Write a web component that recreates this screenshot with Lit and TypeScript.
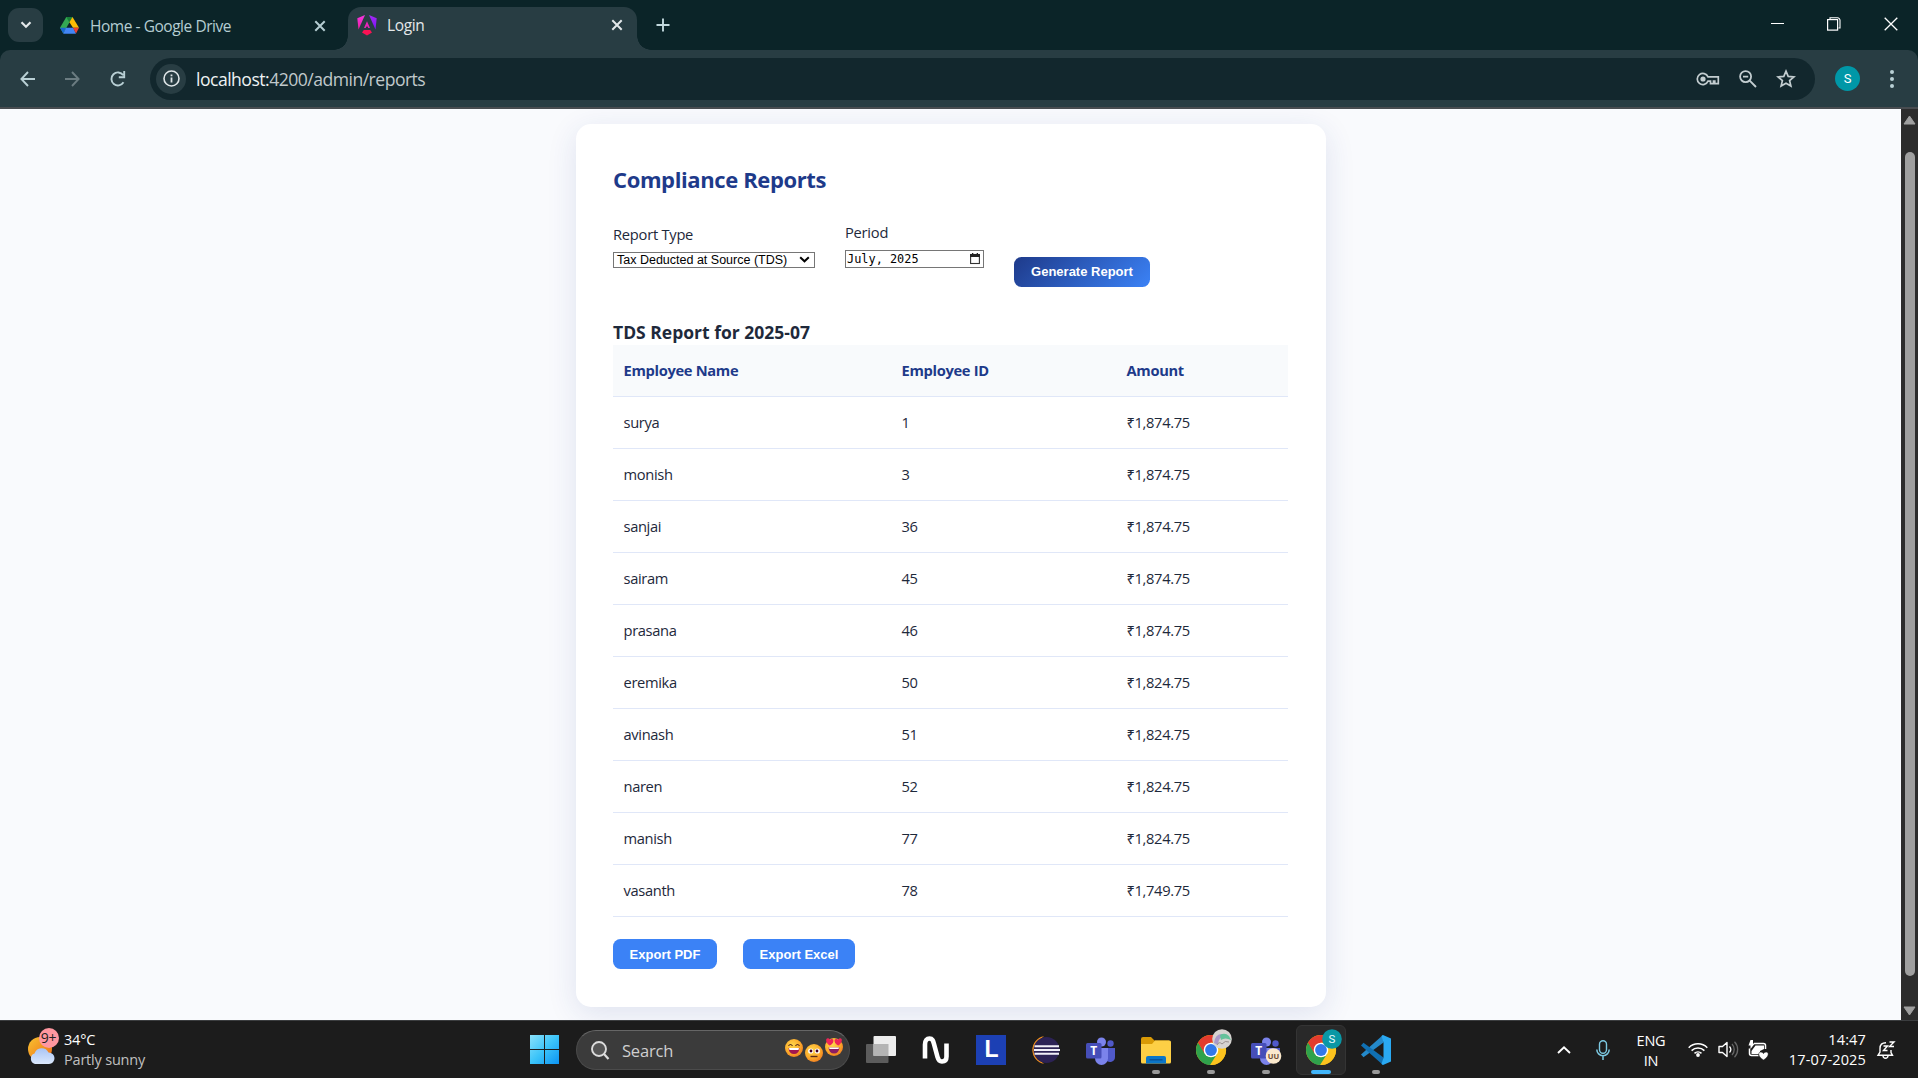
import { LitElement, html, css, svg } from "lit";
import { customElement } from "lit/decorators.js";

const rows: [string, string, string][] = [
  ["surya", "1", "₹1,874.75"],
  ["monish", "3", "₹1,874.75"],
  ["sanjai", "36", "₹1,874.75"],
  ["sairam", "45", "₹1,874.75"],
  ["prasana", "46", "₹1,874.75"],
  ["eremika", "50", "₹1,824.75"],
  ["avinash", "51", "₹1,824.75"],
  ["naren", "52", "₹1,824.75"],
  ["manish", "77", "₹1,824.75"],
  ["vasanth", "78", "₹1,749.75"],
];

const closeIcon = html`<svg width="12" height="12" viewBox="0 0 12 12"><path d="M1.3 1.3 10.7 10.7M10.7 1.3 1.3 10.7" stroke="currentColor" stroke-width="2" fill="none"/></svg>`;

@customElement("browser-tabs")
export class BrowserTabs extends LitElement {
  static styles = css`
    :host { display: flex; height: 50px; background: #0b2428; color: #c3d3d7; font: 15.5px/20px "Open Sans", "Noto Sans", sans-serif; }
    svg { display: block; flex: none; }
    .search { width: 35px; height: 34px; margin: 8px 0 0 8px; border-radius: 11px; background: #283d43; display: grid; place-items: center; color: #e3e8ea; }
    .tab { display: flex; align-items: center; }
    .idle { width: 305px; padding: 1px 22px 0 17px; box-sizing: border-box; color: #b5cdd2; }
    .idle .name { letter-spacing: -0.46px; }
    .active { position: relative; width: 289px; height: 43px; margin-top: 7px; padding: 0 14px 7px 9px; box-sizing: border-box; border-radius: 13px 13px 0 0; background: #283d43; color: #e3e8ea; }
    .active .name { letter-spacing: -0.35px; }
    .active::before, .active::after { content: ""; position: absolute; bottom: 0; width: 14px; height: 14px; }
    .active::before { left: -14px; background: radial-gradient(circle at 0 0, transparent 13.5px, #283d43 14px); }
    .active::after { right: -14px; background: radial-gradient(circle at 100% 0, transparent 13.5px, #283d43 14px); }
    .name { flex: 1; white-space: nowrap; }
    .idle .name { margin-left: 11px; }
    .active .name { margin-left: 10px; }
    .plus { margin: 18px 0 0 19px; }
    .win { margin-left: auto; display: flex; align-items: center; gap: 43px; padding: 0 20px 2px 0; }
  `;
  render() {
    return html`
      <div class="search"><svg width="12" height="8" viewBox="0 0 12 8"><path d="M1.5 1.3 6 5.8 10.500 1.3" stroke="currentColor" stroke-width="2.200" fill="none"/></svg></div>
      <div class="tab idle">
        <svg width="19" height="17" viewBox="0 0 19 17">
          <path d="M6.300 0h6.200L9.400 5.600 3.200 16.200 0 10.800z" fill="#34a853"/>
          <path d="M6.300 0h6.200L9.400 5.500z" fill="#188038"/>
          <path d="M12.500 0 19 10.800H13L9.400 5.200z" fill="#fbbc04"/>
          <path d="M0 10.800h6L3.200 16.400z" fill="#1967d2"/>
          <path d="M6 10.800h7.200l2.800 6H3.200z" fill="#4285f4"/>
          <path d="M13 10.800h6l-3 5.600z" fill="#ea4335"/>
        </svg>
        <span class="name">Home - Google Drive</span>${closeIcon}
      </div>
      <div class="tab active">
        <svg width="20" height="21" viewBox="0 0 20 21">
          <defs>
            <linearGradient id="a" x1="0" y1="0" x2="0" y2="1"><stop offset="0" stop-color="#f637e3"/><stop offset="1" stop-color="#f01ba0"/></linearGradient>
            <linearGradient id="b" x1="0" y1="0" x2="0" y2="1"><stop offset="0" stop-color="#a42bf5"/><stop offset="1" stop-color="#7a12f8"/></linearGradient>
          </defs>
          <path d="M8 0 .3 3.300 1.500 14.500z" fill="url(#a)"/>
          <path d="M12 0 19.700 3.300 18.500 14.500z" fill="url(#b)"/>
          <path d="M10 6.200 13 13h-1.800l-.6-1.500H9.400L8.800 13H7z" fill="#e823b8"/>
          <path d="M6.800 15h6.400l1.800 2.600-5 3-5-3z" fill="#fa1254"/>
        </svg>
        <span class="name">Login</span>${closeIcon}
      </div>
      <svg class="plus" width="14" height="14" viewBox="0 0 14 14"><path d="M7 .5v13M.5 7h13" stroke="#c3d9dd" stroke-width="1.900"/></svg>
      <div class="win">
        <svg width="13" height="14" viewBox="0 0 13 14"><path d="M0 6.500h13" stroke="#fff"/></svg>
        <svg width="14" height="14" viewBox="0 0 14 14"><path d="M3 2V.8h7.500a2.500 2.500 0 0 1 2.500 2.500V11h-1.500" stroke="#fff" stroke-width="1.100" fill="none"/><rect x=".6" y="2.600" width="10" height="10.500" stroke="#fff" stroke-width="1.200" fill="none"/></svg>
        <svg width="14" height="14" viewBox="0 0 14 14"><path d="M.7.700 13.300 13.300M13.300.700.7 13.300" stroke="#fff" stroke-width="1.300"/></svg>
      </div>`;
  }
}

@customElement("browser-toolbar")
export class BrowserToolbar extends LitElement {
  static styles = css`
    :host { display: flex; align-items: center; height: 59px; box-sizing: border-box; background: #283d43; border-bottom: 2px solid #484c50; border-radius: 10px 10px 0 0; color: #b9d0d5; }
    svg { display: block; flex: none; }
    .nav { display: flex; gap: 30px; padding-left: 20px; width: 130px; }
    .dim { color: #6b7c81; }
    .box { flex: 1; display: flex; align-items: center; height: 42px; border-radius: 21px; background: #12272d; padding: 0 19px 0 6px; box-sizing: border-box; }
    .info { width: 30px; height: 30px; border-radius: 50%; background: #283d43; display: grid; place-items: center; color: #dfe5e7; }
    .url { margin-left: 10px; flex: 1; font: 17.600px/24px "Open Sans", "Noto Sans", sans-serif; letter-spacing: -0.52px; color: #c0c9cb; }
    .url b { font-weight: 400; color: #eef2f3; }
    .actions { display: flex; align-items: center; gap: 19px; color: #c3cdd0; }
    .me { width: 25px; height: 25px; border-radius: 50%; background: #0097a7; color: #fff; font: 13px/25px Roboto, sans-serif; text-align: center; margin: 0 30px 0 20px; }
    .dots { margin-right: 24px; }
    .wrap { display: flex; flex: 1; align-items: center; }
  `;
  render() {
    return html`
      <div class="nav">
        <svg width="15" height="16" viewBox="0 0 15 16"><path d="M15 8H1.800M8 1 1.400 8 8 15" stroke="currentColor" stroke-width="1.900" fill="none"/></svg>
        <svg class="dim" width="15" height="16" viewBox="0 0 15 16"><path d="M0 8h13.200M7 1l6.600 7L7 15" stroke="currentColor" stroke-width="1.900" fill="none"/></svg>
        <svg width="16" height="16" viewBox="0 0 16 16"><path d="M13.500 11.300a6.500 6.500 0 1 1-.3-7.200M14.200 0v6.300H8.800" stroke="currentColor" stroke-width="1.900" fill="none"/></svg>
      </div>
      <div class="wrap">
        <div class="box">
          <span class="info"><svg width="17" height="17" viewBox="0 0 17 17"><circle cx="8.500" cy="8.500" r="7.500" stroke="currentColor" stroke-width="1.600" fill="none"/><path d="M8.500 7.600v5M8.500 4.400v1.800" stroke="currentColor" stroke-width="1.800"/></svg></span>
          <span class="url"><b>localhost:</b>4200/admin/reports</span>
          <span class="actions">
            <svg width="24" height="14" viewBox="0 0 24 14"><path d="M12 4.800a5.600 5.600 0 1 0 0 4.400h2.500v2.500h3V9.200h1.300v2.500h3.500V4.800z" stroke="currentColor" stroke-width="1.700" fill="none"/><circle cx="7" cy="7" r="2.600" fill="currentColor"/></svg>
            <svg width="18" height="18" viewBox="0 0 18 18"><circle cx="6.600" cy="6.600" r="5.500" stroke="currentColor" stroke-width="1.800" fill="none"/><path d="M10.700 10.700 17 17M4 6.600h5.200" stroke="currentColor" stroke-width="1.900"/></svg>
            <svg width="20" height="19" viewBox="0 0 20 19"><path d="m10 2.200 2.200 5.200 5.700.5-4.300 3.700 1.300 5.500L10 14.200l-4.900 2.900 1.300-5.500L2.100 7.900l5.700-.5z" stroke="currentColor" stroke-width="1.700" fill="none"/></svg>
          </span>
        </div>
        <span class="me">S</span>
        <svg class="dots" width="4" height="18" viewBox="0 0 4 18" fill="currentColor"><circle cx="2" cy="2" r="2"/><circle cx="2" cy="9" r="2"/><circle cx="2" cy="16" r="2"/></svg>
      </div>`;
  }
}

@customElement("report-page")
export class ReportPage extends LitElement {
  static styles = css`
    :host { display: flex; justify-content: space-between; height: 911px; overflow: hidden; background: #f9fafd; color: #1e293b; font: 14.700px/20px "Open Sans", "Noto Sans", sans-serif; }
    .view { flex: 1; display: flex; justify-content: center; align-items: flex-start; padding-top: 15px; }
    .card { width: 750px; height: 883px; box-sizing: border-box; padding: 39px 37.500px 0; background: #fff; border-radius: 15px; box-shadow: 0 7px 30px rgba(30, 58, 138, 0.12); }
    h2 { margin: 0; font: bold 22px/32px "Open Sans", sans-serif; color: #1e3a8a; letter-spacing: -0.38px; white-space: nowrap; }
    .form { display: flex; align-items: flex-start; margin-top: 27px; height: 98px; }
    .type { width: 202px; padding-top: 2px; margin-right: 30px; letter-spacing: -0.25px; }
    .period { width: 139px; margin-right: 30px; letter-spacing: -0.25px; }
    .field { display: flex; align-items: center; justify-content: space-between; border: 1px solid #767676; box-sizing: border-box; color: #000; background: #fff; letter-spacing: 0; white-space: nowrap; }
    .select { height: 16px; margin-top: 8px; padding: 0 4px 1px 3px; font: 12.500px/14px "Liberation Sans", Arial, sans-serif; }
    .month { height: 18px; margin-top: 8px; padding: 0 3px 0 1px; font: 11.900px/16px "DejaVu Sans Mono", monospace; }
    .month svg { margin-top: -1px; }
    button { border: 0; margin: 0; padding: 0; height: 30px; border-radius: 7.500px; color: #fff; font: bold 13px/30px "Liberation Sans", Arial, sans-serif; white-space: nowrap; }
    .generate { width: 136px; margin-top: 35px; background: linear-gradient(135deg, #1e3a8a, #3b82f6); }
    h3 { margin: 0 0 1px; font: bold 17.500px/24px "Open Sans", sans-serif; letter-spacing: 0; }
    .row { display: grid; grid-template-columns: 278px 225px 1fr; height: 52px; box-sizing: border-box; border-bottom: 1px solid #e0e7f8; align-items: center; padding: 0 0 2px 10.500px; letter-spacing: -0.35px; }
    .head { background: #f8fafc; color: #1e3a8a; font-weight: 700; letter-spacing: -0.32px; }
    .exports { display: flex; gap: 26px; margin-top: 22px; }
    .pdf, .xls { background: #3b82f6; padding-top: 1px; }
    .pdf { width: 104px; }
    .xls { width: 112px; }
    .bar { width: 17px; background: #2c2c2c; display: flex; flex-direction: column; align-items: center; padding: 6px 0 4px; box-sizing: border-box; }
    .thumb { width: 10px; height: 824px; margin: 27px 0 auto 1px; border-radius: 5px; background: #9f9f9f; }
    svg { display: block; flex: none; }
  `;
  render() {
    return html`
      <div class="view">
        <div class="card">
          <h2>Compliance Reports</h2>
          <div class="form">
            <div class="type">Report Type
              <div class="field select"><span>Tax Deducted at Source (TDS)</span><svg width="11" height="7" viewBox="0 0 11 7"><path d="M1.200 1.200 5.500 5.300 9.800 1.200" stroke="#000" stroke-width="2" fill="none"/></svg></div>
            </div>
            <div class="period">Period
              <div class="field month"><span>July, 2025</span><svg width="10" height="12" viewBox="0 0 10 12"><rect x=".6" y="1.500" width="8.800" height="9" stroke="#333" stroke-width="1.100" fill="none"/><path d="M0 1h10v3H0zM2 0h1.300v2H2zM6.700 0H8v2H6.700z" fill="#222"/></svg></div>
            </div>
            <button class="generate">Generate Report</button>
          </div>
          <h3>TDS Report for 2025-07</h3>
          <div class="row head"><span>Employee Name</span><span>Employee ID</span><span>Amount</span></div>
          ${rows.map((r) => html`<div class="row">${r.map((c) => html`<span>${c}</span>`)}</div>`)}
          <div class="exports"><button class="pdf">Export PDF</button><button class="xls">Export Excel</button></div>
        </div>
      </div>
      <div class="bar">
        <svg width="13" height="10" viewBox="0 0 13 10"><path d="M6.500 1 12 9H1z" fill="#9f9f9f" stroke="#9f9f9f" stroke-linejoin="round"/></svg>
        <div class="thumb"></div>
        <svg width="13" height="10" viewBox="0 0 13 10"><path d="M6.500 9 12 1H1z" fill="#9f9f9f" stroke="#9f9f9f" stroke-linejoin="round"/></svg>
      </div>`;
  }
}

const face = (x: number, y: number, inner: unknown) => svg`<g transform="translate(${x} ${y})"><circle cx="9" cy="9" r="9" fill="url(#skin)"/>${inner}</g>`;

const emojis = html`<svg width="58" height="25" viewBox="0 0 58 25">
  <defs><radialGradient id="skin" cx=".4" cy=".35" r=".7"><stop offset="0" stop-color="#ffd84d"/><stop offset=".65" stop-color="#fba829"/><stop offset="1" stop-color="#ee7a22"/></radialGradient></defs>
  ${face(0, 1, svg`<path d="M3.500 6.800q2-2.600 4 0M10.500 6.800q2-2.600 4 0" stroke="#5a2a1a" stroke-width="1.200" fill="none"/><path d="M3.500 9h11q-.6 6-5.500 6t-5.500-6" fill="#a3164f"/><path d="M4 9h10l-.5 2h-9z" fill="#fff"/>`)}
  ${face(20, 6, svg`<circle cx="5.700" cy="7" r="2.600" fill="#fff"/><circle cx="12.300" cy="7" r="2.600" fill="#fff"/><circle cx="6" cy="7" r="1.400" fill="#402"/><circle cx="12" cy="7" r="1.400" fill="#402"/><path d="M5.500 12.500h7" stroke="#5a2a1a" stroke-width="1.400"/>`)}
  ${face(40, 0, svg`<path d="M4.500 7.500C0 4 .5 0 3 .3 4.500.4 4.700 1.500 4.900 2 5.500.5 8.500.3 8.400 3 8.300 5.500 6 7 4.500 7.500M13.500 7.500C18 4 17.500 0 15 .3c-1.500.1-1.700 1.200-1.900 1.700C12.500.5 9.500.3 9.600 3c.1 2.500 2.400 4 3.900 4.500" fill="#ee2458"/><path d="M3.500 9.500h11q-.6 6-5.500 6t-5.500-6" fill="#8d1d63"/><path d="M4 9.500h10l-.5 1.600h-9z" fill="#fff"/>`)}
</svg>`;

const chrome = svg`
  <circle cx="15" cy="15" r="15" fill="#fbbc04"/>
  <path d="M28 7.500A15 15 0 0 1 14 30l7.300-12L18 8z" fill="#fcc31e"/>
  <path d="M2 7.500A15 15 0 0 0 14 30l7.300-11.500L9 18z" fill="#2fa24c"/>
  <path d="M15 7.500H28A15 15 0 0 0 2 7.500L8.500 18.500z" fill="#e33b2e"/>
  <circle cx="15" cy="15" r="7.300" fill="#fff"/><circle cx="15" cy="15" r="5.900" fill="#3278ea"/>`;

const teams = svg`
  <circle cx="15.500" cy="5" r="4.500" fill="#7b83eb"/><circle cx="24.500" cy="6.500" r="3.200" fill="#5059c9"/>
  <path d="M20 11h9v9a5 5 0 0 1-9 3z" fill="#5059c9"/>
  <path d="M9 11h13v10.500a6.500 6.500 0 0 1-13 0z" fill="#7b83eb"/>
  <rect x="0" y="6" width="15.500" height="15.500" rx="1.500" fill="#464eb8"/>
  <text x="7.750" y="18" font-size="12" font-weight="700" text-anchor="middle" fill="#fff" font-family="Open Sans, sans-serif">T</text>`;

@customElement("task-bar")
export class TaskBar extends LitElement {
  static styles = css`
    :host { display: flex; align-items: stretch; height: 58px; box-sizing: border-box; border-top: 1px solid #3b3d3f; background: #1c1c1c; color: #fff; font: 14.500px/20px "Open Sans", "Noto Sans", sans-serif; }
    svg { display: block; flex: none; overflow: visible; }
    .weather { width: 526px; display: flex; padding-left: 27px; gap: 5px; box-sizing: border-box; letter-spacing: -0.2px; }
    .weather svg { margin-top: 5px; }
    .weather .txt { padding-top: 9px; }
    .txt div + div { color: #c0c0c0; }
    .start { width: 50px; display: flex; align-items: center; padding-left: 4px; box-sizing: border-box; }
    .search { display: flex; align-items: center; width: 274px; height: 40px; margin-top: 9px; padding: 0 6px 0 14px; border: 1px solid #4b4b4b; border-top-color: #666; border-radius: 20px; background: #3b3b3b; box-sizing: border-box; color: #cfcfcf; font-size: 16.500px; letter-spacing: -0.2px; }
    .search span { flex: 1; margin: 1px 0 0 13px; }
    .apps { display: grid; grid-auto-flow: column; grid-auto-columns: 55px; margin-left: 3px; }
    .app { display: flex; flex-direction: column; align-items: center; padding-top: 14px; box-sizing: border-box; }
    .app.on { margin: 4px 3px; padding-top: 9px; border: 1px solid #343434; border-radius: 6px; background: #292929; width: 50px; height: 50px; box-sizing: border-box; }
    .dot { width: 8px; height: 4px; margin-top: 5px; border-radius: 2px; background: #9a9a9a; }
    .on .dot { width: 20px; background: #42b6fb; }
    .tray { display: flex; margin-left: auto; align-items: center; padding-right: 23px; }
    .lang { text-align: center; width: 42px; margin: 3px 16px 0 20px; letter-spacing: -0.2px; }
    .clock { text-align: right; width: 86px; margin: 1px 11px 0 12px; letter-spacing: 0.150px; white-space: nowrap; }
    .mic { margin-left: 25px; }
    .g { margin-right: 10px; }
  `;
  render() {
    return html`
      <div class="weather">
        <svg width="32" height="38" viewBox="0 0 32 38">
          <defs>
            <linearGradient id="sun" x1="0" y1="0" x2="1" y2="1"><stop offset="0" stop-color="#f7c331"/><stop offset="1" stop-color="#f06a15"/></linearGradient>
            <linearGradient id="cl" x1="0" y1="0" x2="0" y2="1"><stop offset="0" stop-color="#a9c4f4"/><stop offset="1" stop-color="#dbe8fc"/></linearGradient>
          </defs>
          <circle cx="13" cy="23" r="12" fill="url(#sun)"/>
          <path d="M8 38a5.500 5.500 0 0 1-.5-10.500 7.500 7.500 0 0 1 14-1A5.700 5.700 0 0 1 22 38z" fill="url(#cl)"/>
          <circle cx="22" cy="12" r="10" fill="#ff97a0"/>
          <text x="21.500" y="17" text-anchor="middle" font-size="14" fill="#222" font-family="Open Sans, sans-serif">9+</text>
        </svg>
        <div class="txt"><div>34°C</div><div>Partly sunny</div></div>
      </div>
      <div class="start">
        <svg width="29" height="29" viewBox="0 0 29 29"><defs><linearGradient id="w" gradientUnits="userSpaceOnUse" x1="0" y1="0" x2="29" y2="29"><stop offset="0" stop-color="#8be2fb"/><stop offset=".5" stop-color="#3cc4f9"/><stop offset="1" stop-color="#0c93f3"/></linearGradient></defs><path d="M0 0h14v14H0zM15 0h14v14H15zM0 15h14v14H0zM15 15h14v14H15z" fill="url(#w)"/></svg>
      </div>
      <div class="search">
        <svg width="18" height="19" viewBox="0 0 18 19"><circle cx="8" cy="8" r="7" stroke="#dcdcdc" stroke-width="1.900" fill="#555"/><path d="m13 13 4.500 5" stroke="#dcdcdc" stroke-width="2.200"/></svg>
        <span>Search</span>${emojis}
      </div>
      <div class="apps">
        <div class="app"><svg width="30" height="30" viewBox="0 0 30 30"><rect x="0" y="9" width="22.500" height="19" rx="1" fill="#5c5c5c"/><rect x="7.500" y="1" width="22.500" height="20" rx="1" fill="#ececec"/><path d="M7.500 9h15v12h-15z" fill="#b4b4b4"/></svg></div>
        <div class="app"><svg width="30" height="30" viewBox="0 0 30 30"><path d="M4 23.500V9.500C4 5.500 6 3.500 8.500 3.500c3 0 3.600 2 4.500 5.500l3.500 13c.8 3 2 4.500 4.500 4.500 3 0 4.500-2 4.500-5V8.500" stroke="#fff" stroke-width="4.600" stroke-linecap="butt" fill="none"/></svg></div>
        <div class="app"><svg width="30" height="30" viewBox="0 0 30 30"><rect width="30" height="30" fill="#1c40b4"/><path d="M9 22 13 7v15z" fill="#123038"/><text x="8.500" y="22" font-size="23" font-weight="700" fill="#fff" font-family="Liberation Sans, sans-serif">L</text></svg></div>
        <div class="app"><svg width="30" height="30" viewBox="0 0 30 30"><path d="M13 1.200A14 14 0 0 0 13 28.800 16 16 0 0 1 13 1.200" fill="#f7941e"/><circle cx="15.500" cy="15" r="13" fill="#2c2255"/><path d="M3.500 11.200h24.500M3 15h26M3.500 18.800h24.500" stroke="#f1eff8" stroke-width="2"/></svg></div>
        <div class="app"><svg width="30" height="30" viewBox="0 0 30 30"><g transform="translate(0 2)">${teams}</g></svg></div>
        <div class="app"><svg width="30" height="30" viewBox="0 0 30 30"><path d="M0 4q0-2 2-2h8l3.500 3.500H28V12H0z" fill="#d99a06"/><path d="M0 9h11l3-3.500h14.500Q30 5.500 30 7v20q0 1.500-1.500 1.500h-27Q0 28.500 0 27z" fill="#fdcf45"/><path d="M5 28.500V23q0-2 2-2h16q2 0 2 2v5.500z" fill="#0b76c8"/><path d="M8.500 24.800h13" stroke="#0a4f95" stroke-width="1.300"/></svg><i class="dot"></i></div>
        <div class="app"><svg width="30" height="30" viewBox="0 0 30 30">${chrome}<circle cx="26" cy="4" r="9.800" fill="#d6d3d0"/><path d="M18 8q1-9 8-9l3 2q-7 1-7 9z" fill="#a999c9"/><path d="M24 0q5-3 9 1l2 4q-6-3-10 0z" fill="#64c29a"/><path d="M21 10q2-4 5-1 3-4 7-2" stroke="#9a8f8d" fill="none"/></svg><i class="dot"></i></div>
        <div class="app"><svg width="30" height="30" viewBox="0 0 30 30"><g transform="translate(0 2)">${teams}</g><circle cx="22.500" cy="21" r="7.800" fill="#fbe9cc"/><text x="22.500" y="24" text-anchor="middle" font-size="7.500" font-weight="700" fill="#6a4a32" font-family="Open Sans, sans-serif">UU</text></svg><i class="dot"></i></div>
        <div class="app on"><svg width="30" height="30" viewBox="0 0 30 30">${chrome}<circle cx="26" cy="4" r="9.800" fill="#0a97a5"/><text x="26" y="8.200" text-anchor="middle" font-size="11.500" fill="#e8fbff" font-family="Roboto, sans-serif">S</text></svg><i class="dot"></i></div>
        <div class="app"><svg width="30" height="30" viewBox="0 0 30 30"><path d="M22 0 0 19.500l2.500 2.700L22.500 7.500z" fill="#2489ca"/><path d="M22 30 0 10.500l2.500-2.700L22.500 22.500z" fill="#1070b3"/><path d="M22 0l8 3.500v23L22 30l-1.500-1 2-6.500v-15l-2-6.500z" fill="#2aa9f2"/></svg><i class="dot"></i></div>
      </div>
      <div class="tray">
        <svg width="14" height="8" viewBox="0 0 14 8"><path d="M1 7 7 1.300 13 7" stroke="#fff" stroke-width="1.900" fill="none"/></svg>
        <svg class="mic" width="14" height="20" viewBox="0 0 14 20"><rect x="3.500" y=".8" width="7" height="12.500" rx="3.500" stroke="#7cc9e2" stroke-width="1.400" fill="none"/><path d="M.8 9.500a6.200 6.200 0 0 0 12.400 0M7 16v4" stroke="#7cc9e2" stroke-width="1.500" fill="none"/></svg>
        <div class="lang">ENG<br>IN</div>
        <svg class="g" width="20" height="15" viewBox="0 0 20 15"><g stroke="#fff" stroke-width="1.500" fill="none"><path d="M.7 5.700a13 13 0 0 1 18.600 0M3.600 8.600a9 9 0 0 1 12.800 0M6.500 11.400a5 5 0 0 1 7 0"/></g><circle cx="10" cy="13" r="1.900" fill="#fff"/></svg>
        <svg class="g" width="20" height="17" viewBox="0 0 20 17"><path d="M1 5.500h3.500L9 1.500v14l-4.500-4H1z" stroke="#fff" stroke-width="1.400" stroke-linejoin="round" fill="none"/><path d="M11.500 5.500a4.500 4.500 0 0 1 0 6" stroke="#fff" stroke-width="1.300" fill="none"/><path d="M14 3a8 8 0 0 1 0 11M16.500.8a11 11 0 0 1 0 15.400" stroke="#666" stroke-width="1.300" fill="none"/></svg>
        <svg width="20" height="20" viewBox="0 0 20 20"><path d="M6 3.500h9.500a2 2 0 0 1 2 2V9M1.500 8.500v5a2 2 0 0 0 2 2h7" stroke="#fff" stroke-width="1.500" fill="none"/><path d="M7.500 5.500h8.500v3.500l-4 2v3H3.500V11z" fill="#fff"/><path d="M2.500 0 5 0v3.500h1.800L2.500 9V5.500H.5z" fill="#fff"/><path d="M15.500 20c-6-3.500-5.500-8-2.800-8 1.500 0 2.300.8 2.800 1.600.5-.8 1.300-1.600 2.800-1.600 2.700 0 3.200 4.500-2.800 8" fill="#fff" stroke="#1c1c1c" stroke-width=".6"/></svg>
        <div class="clock">14:47<br>17-07-2025</div>
        <svg width="18" height="18" viewBox="0 0 18 18"><path d="M9 1.800Q3 1.800 3 7.500v3.500L1 14.300h14.500L14 11.500V9M6 15q.3 2.200 2.500 2.200T11 15" stroke="#fff" stroke-width="1.400" fill="none"/><path d="M6.500 5h4L6.500 9.500h4M12.500 1H17l-4.500 4.500H17" stroke="#fff" stroke-width="1.400" fill="none"/></svg>
      </div>`;
  }
}

@customElement("app-root")
export class AppRoot extends LitElement {
  static styles = css`
    :host { display: flex; flex-direction: column; width: 1918px; height: 1078px; overflow: hidden; background: #0b2428; }
  `;
  render() {
    return html`<browser-tabs></browser-tabs><browser-toolbar></browser-toolbar><report-page></report-page><task-bar></task-bar>`;
  }
}
